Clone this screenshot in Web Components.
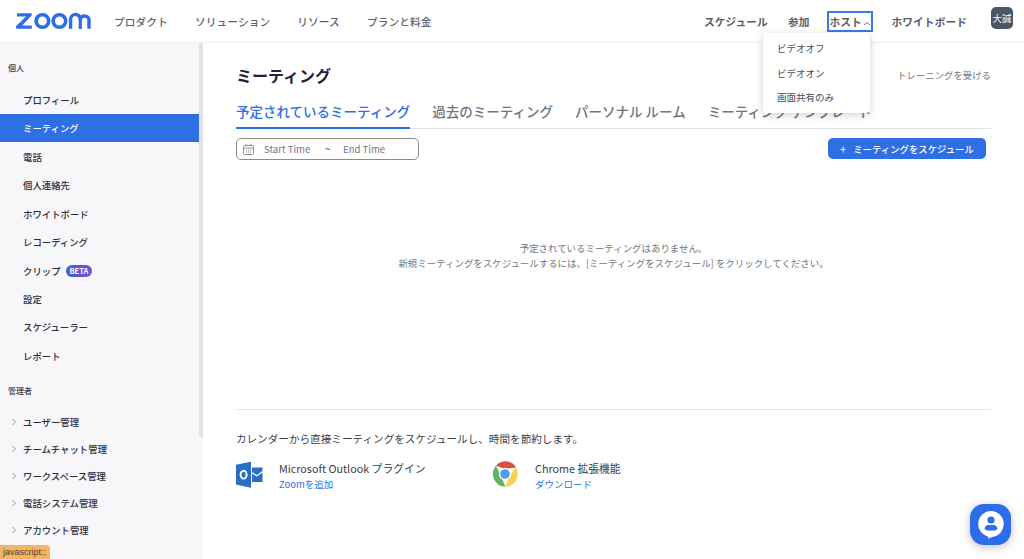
<!DOCTYPE html>
<html lang="ja"><head><meta charset="utf-8"><title>Zoom</title>
<style>
html,body{margin:0;height:100%;overflow:hidden}
body{font-family:"Noto Sans CJK JP","Noto Sans",sans-serif;color:#232333;background:#fff}
</style></head><body>
<zm-app></zm-app>
<script>
const el=(name,html,css)=>customElements.define(name,class extends HTMLElement{
  constructor(){super();this.attachShadow({mode:'open'}).innerHTML=`<style>${css}</style>${html}`;}
});
el('zm-logo',`<svg width="75" height="18" viewBox="0 0 75 18" fill="none">
<path d="M1 1.2H14.2Q16.4 1.2 15.6 3.6L6.2 13.4H15.8V16.8H1.2Q-.8 16.4 .2 14L10 4.6H1Z" fill="#2D6CEA"/>
<circle cx="26.4" cy="9" r="6.3" stroke="#2D6CEA" stroke-width="3.6"/>
<circle cx="43.4" cy="9" r="6.3" stroke="#2D6CEA" stroke-width="3.6"/>
<path d="M54.6 17V7.2A5 5 0 0 1 59.6 2.6A5 5 0 0 1 64.2 6.4A5 5 0 0 1 73 7.2V17" stroke="#2D6CEA" stroke-width="3.4" transform="translate(0 -.2)"/>
<path d="M64.3 6.5V17" stroke="#2D6CEA" stroke-width="3.2"/></svg>`,`:host{display:block;line-height:0}`);
el('zm-nav-link',`<slot></slot>`,`:host{display:block;font-size:10.7px;font-weight:500;color:#5f5f6e;letter-spacing:.1px;line-height:16px;white-space:nowrap}
:host([strong]){font-weight:700;color:#5b5b6b}`);
el('zm-dropdown',`<div>ビデオオフ</div><div>ビデオオン</div><div>画面共有のみ</div>`,
`:host{position:absolute;left:763px;top:33px;width:107px;height:80px;background:#fff;border-radius:4px;box-shadow:0 2px 8px rgba(35,35,51,.2);padding:3px 0 0;box-sizing:border-box;z-index:5;font-size:9.5px;color:#494958}
div{height:24.6px;line-height:24.6px;padding-left:14px}`);
el('zm-header',`
<zm-logo></zm-logo>
<nav class="l"><zm-nav-link>プロダクト</zm-nav-link><zm-nav-link>ソリューション</zm-nav-link><zm-nav-link>リソース</zm-nav-link><zm-nav-link>プランと料金</zm-nav-link></nav>
<nav class="r"><zm-nav-link strong>スケジュール</zm-nav-link><zm-nav-link strong>参加</zm-nav-link>
<div class="host"><zm-nav-link strong>ホスト</zm-nav-link><svg width="8" height="5" viewBox="0 0 8 5" fill="none"><path d="M1 4 4 1.3 7 4" stroke="#6e7680"/></svg></div>
<zm-nav-link strong>ホワイトボード</zm-nav-link></nav>
<div class="av">大誠</div>`,
`:host{display:flex;align-items:center;height:43px;box-sizing:border-box;border-bottom:1px solid #efeff2;padding-left:16px;background:#fff}
zm-logo{margin-top:-1px}
nav{display:flex;align-items:center}
.l{gap:27px;margin-left:23px;margin-top:1px}
.r{margin-left:auto;gap:20px;margin-top:1px}
.host{display:flex;align-items:center;gap:1px;height:21px;box-sizing:border-box;border:2px solid #3b78e7;padding:0;width:46px;margin:0 -2px 0 -2px}
.host svg{margin-top:3px}
.av{width:22px;height:22px;border-radius:5px;background:#4a5763;color:#fff;font-size:9.5px;line-height:22px;text-align:center;margin:-6px 11px 0 24px;white-space:nowrap}`);
el('zm-side-item',`<svg class="c" width="6" height="8" viewBox="0 0 6 8" fill="none"><path d="M1.5 1 4.5 4 1.5 7" stroke="#9a9aa5"/></svg><slot></slot>`,
`:host{display:flex;align-items:center;height:28.4px;padding-left:23px;font-size:9.4px;font-weight:500;color:#2d2d3a;box-sizing:border-box;gap:5px;white-space:nowrap}
.c{display:none}
:host([active]){background:#2f6fe4;color:#fff;height:27.4px;margin-bottom:1px}
:host([sub]){height:27px;padding-left:11px}
:host([sub]) .c{display:block;margin-right:1px}`);
el('zm-side-head',`<slot></slot>`,`:host{display:block;font-size:8px;font-weight:500;color:#3a3a48;padding-left:8px;line-height:14px}`);
el('zm-beta',`BETA`,`:host{display:inline-block;background:linear-gradient(90deg,#3b5fdc,#7a4fd8);color:#fff;font-size:7.5px;font-weight:700;line-height:12px;height:12px;padding:0 4px;border-radius:6px}`);
el('zm-sidebar',`
<div class="scroll">
<zm-side-head style="margin-top:18px;margin-bottom:11px">個人</zm-side-head>
<zm-side-item>プロフィール</zm-side-item><zm-side-item active>ミーティング</zm-side-item><zm-side-item>電話</zm-side-item><zm-side-item>個人連絡先</zm-side-item><zm-side-item>ホワイトボード</zm-side-item><zm-side-item>レコーディング</zm-side-item>
<zm-side-item>クリップ <zm-beta></zm-beta></zm-side-item><zm-side-item>設定</zm-side-item><zm-side-item>スケジューラー</zm-side-item><zm-side-item>レポート</zm-side-item>
<zm-side-head style="margin-top:14px;margin-bottom:11px">管理者</zm-side-head>
<zm-side-item sub>ユーザー管理</zm-side-item><zm-side-item sub>チームチャット管理</zm-side-item><zm-side-item sub>ワークスペース管理</zm-side-item><zm-side-item sub>電話システム管理</zm-side-item><zm-side-item sub>アカウント管理</zm-side-item>
</div><div class="track"><div class="thumb"></div></div>`,
`:host{display:flex;width:203px;flex:none;background:#f7f7fa;overflow:hidden}
.scroll{width:199px;flex:none}
.track{width:4px;height:100%}
.thumb{height:394px;background:#e3e3e6}`);
el('zm-tab',`<slot></slot>`,`:host{display:block;font-size:13.5px;font-weight:500;color:#6e7680;height:30px;box-sizing:border-box;line-height:25px;white-space:nowrap}
:host([active]){color:#2f6fe4;border-bottom:2px solid #2f6fe4}`);
el('zm-date-range',`<svg width="11" height="11" viewBox="0 0 11 11" fill="none" stroke="#8f8f99"><rect x=".5" y="1.5" width="10" height="9" rx="1"/><path d="M.5 4h10M3 0v2M8 0v2M3 6h1M5 6h1M7 6h1M3 8h1M5 8h1M7 8h1"/></svg><span class="a">Start Time</span><span class="t">~</span><span class="b">End Time</span>`,
`:host{display:flex;align-items:center;width:183px;height:22px;box-sizing:border-box;border:1px solid #8a8a93;border-radius:5px;padding-left:6px;font-size:9.6px;color:#747487}
.a{margin-left:10px;width:61px}.t{width:18px;font-weight:700}`);
el('zm-button',`<span class="p">+</span><slot></slot>`,`:host{display:flex;align-items:center;justify-content:center;gap:7px;width:158px;height:21px;background:#2f6fe4;color:#fff;border-radius:5px;font-size:9.4px;font-weight:500;white-space:nowrap}
.p{font-size:11px;font-weight:400}`);
el('zm-plugin',`<div class="i"><slot name="icon"></slot></div><div class="t"><div class="n"><slot name="name"></slot></div><div class="d"><slot name="link"></slot></div></div>`,
`:host{display:flex;align-items:flex-start}
.i{width:43px;flex:none;line-height:0}
.n{font-size:10.8px;line-height:15px;color:#3c3c48;white-space:nowrap}
.d{font-size:9.5px;line-height:15px;margin-top:1px;color:#2f6fe4;white-space:nowrap}`);
el('zm-main',`
<div class="top"><h1>ミーティング</h1><span class="tr">トレーニングを受ける</span></div>
<div class="tabs"><zm-tab active>予定されているミーティング</zm-tab><zm-tab>過去のミーティング</zm-tab><zm-tab>パーソナル ルーム</zm-tab><zm-tab>ミーティング テンプレート</zm-tab></div>
<div class="tools"><zm-date-range></zm-date-range><zm-button>ミーティングをスケジュール</zm-button></div>
<div class="empty"><div>予定されているミーティングはありません。</div><div>新規ミーティングをスケジュールするには、[ミーティングをスケジュール] をクリックしてください。</div></div>
<div class="foot">
<p>カレンダーから直接ミーティングをスケジュールし、時間を節約します。</p>
<div class="pl">
<zm-plugin style="width:256px"><svg slot="icon" style="margin-left:-1px" width="28" height="28" viewBox="0 0 28 28"><path d="M16 .8 1 3.7V23.5L16 26.7Z" fill="#2a6dc4"/><path d="M17 6.5H27.5V10L22 14 17 11Z" fill="#2a6dc4"/><path d="M17 12.5 22 15.5 27.5 11.5V21H17Z" fill="#2a6dc4"/><ellipse cx="8.6" cy="13.7" rx="3" ry="3.9" fill="none" stroke="#fff" stroke-width="1.9"/></svg><span slot="name">Microsoft Outlook プラグイン</span><span slot="link">Zoomを追加</span></zm-plugin>
<zm-plugin><svg slot="icon" width="26" height="26" viewBox="0 0 26 26"><path d="M13 .3A12.7 12.7 0 0 1 24 6.6L13 8 4 4.7A12.7 12.7 0 0 1 13 .3Z" fill="#d8503f"/><path d="M24 6.6A12.7 12.7 0 0 1 13.4 25.7L18 14Z" fill="#f8d24c"/><path d="M13.4 25.7A12.7 12.7 0 0 1 4 4.7L9 15Z" fill="#5cb660"/><circle cx="13" cy="13" r="6.2" fill="#fff"/><circle cx="13" cy="13" r="4.8" fill="#4f9fe3"/></svg><span slot="name">Chrome 拡張機能</span><span slot="link">ダウンロード</span></zm-plugin>
</div></div>`,
`:host{display:block;flex:1;min-width:0;padding:0 33px 0 33px;box-sizing:border-box;overflow:hidden;white-space:nowrap}
.top{display:flex;align-items:center;justify-content:space-between;height:28px;margin-top:18px}
h1{margin:-1px 0 0;font-size:16px;font-weight:700;color:#232333}
.tr{font-size:9.4px;color:#747487}
.tabs{display:flex;gap:22px;margin-top:10px;height:29px;border-bottom:1px solid #dfe3e8;width:755px}
.tools{display:flex;justify-content:space-between;width:750px;margin-top:9px}
.empty{text-align:center;font-size:9.45px;line-height:15px;color:#6e7680;width:755px;margin-top:81px}
.foot{margin-top:138px;border-top:1px solid #e6e6ea;width:755px;padding-top:21px}
p{margin:0 0 14px;font-size:10.6px;line-height:16px;color:#3c3c48}
.pl{display:flex}`);
el('zm-fab',`<svg width="28" height="29" viewBox="0 0 28 29"><path d="M14 1a13 13 0 0 1 2 25.8L11 28.6V26.6A13 13 0 0 1 14 1Z" fill="#fff"/><circle cx="14" cy="10" r="3.6" fill="#2D6CEA"/><path d="M7.6 18.5Q8 15 11.5 15H16.5Q20 15 20.4 18.5Q20 20.5 17.5 20.5H10.5Q8 20.5 7.6 18.5Z" fill="#2D6CEA"/></svg>`,
`:host{position:absolute;right:13px;bottom:14px;width:41px;height:41px;background:#2d6cea;border-radius:14px;display:flex;align-items:center;justify-content:center;box-shadow:0 2px 10px rgba(35,35,51,.28);line-height:0}`);
el('zm-status',`javascript:;`,`:host{position:absolute;left:0;bottom:0;background:#f7b45f;color:#4a4030;font-size:9px;line-height:14px;height:14px;padding:0 4px 0 3px;border-top-right-radius:4px;font-family:"Liberation Sans",sans-serif}`);
el('zm-app',`<zm-header></zm-header><div class="body"><zm-sidebar></zm-sidebar><zm-main></zm-main></div><zm-dropdown></zm-dropdown><zm-fab></zm-fab><zm-status></zm-status>`,
`:host{display:flex;flex-direction:column;position:relative;width:1024px;height:559px;overflow:hidden}
.body{display:flex;flex:1;min-height:0}`);
</script>
</body></html>
